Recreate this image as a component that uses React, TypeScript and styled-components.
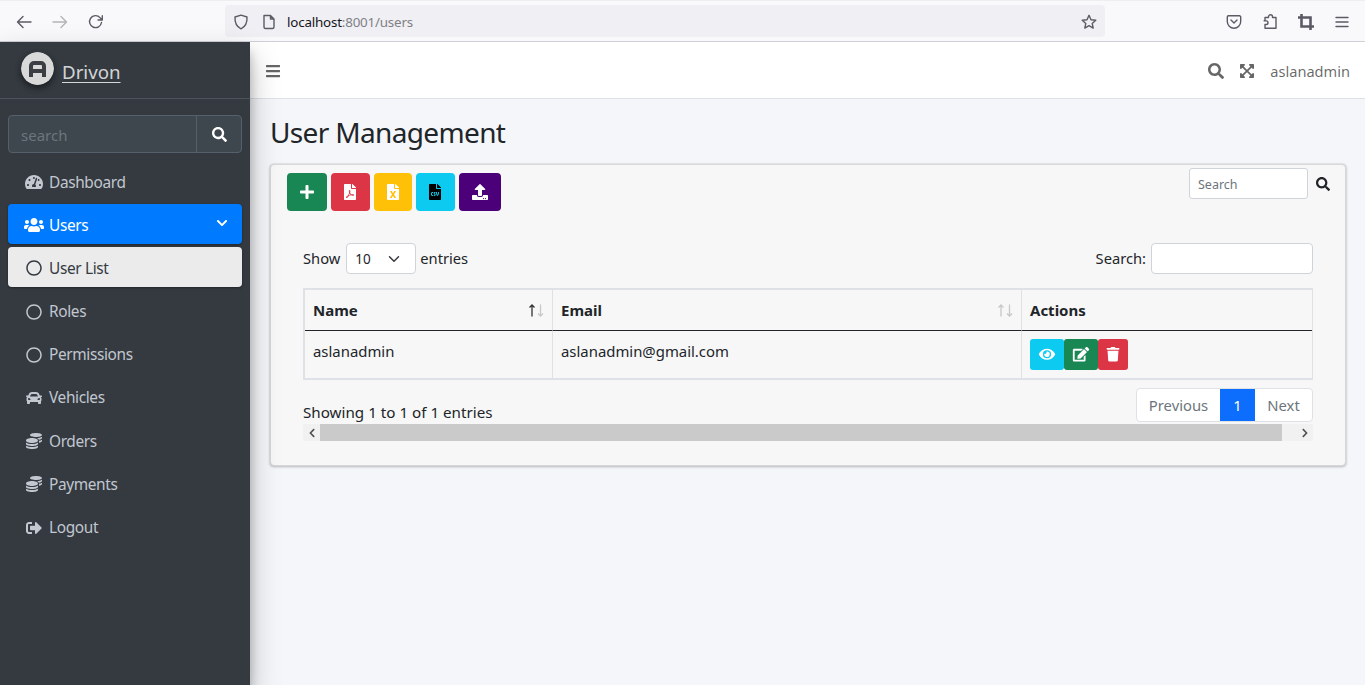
import React from 'react';
import styled, { createGlobalStyle } from 'styled-components';
import {
  FaBars,
  FaChevronDown,
  FaCar,
  FaCoins,
  FaEdit,
  FaExpandArrowsAlt,
  FaEye,
  FaFileCsv,
  FaFileExcel,
  FaFilePdf,
  FaPlus,
  FaRegCircle,
  FaSearch,
  FaSignOutAlt,
  FaTachometerAlt,
  FaTrash,
  FaUpload,
  FaUsers,
  FaChevronLeft,
  FaChevronRight,
} from 'react-icons/fa';

const GlobalStyle = createGlobalStyle`
  html, body {
    margin: 0;
    height: 100%;
    overflow: hidden;
  }
  body {
    font-family: "Noto Sans", "Open Sans", sans-serif;
    font-size: 15px;
    color: #212529;
    background: #f4f6f9;
  }
  * {
    box-sizing: border-box;
  }
`;

const Page = styled.div`
  width: 1365px;
  height: 685px;
  display: flex;
  flex-direction: column;
  overflow: hidden;
`;

/* browser chrome */
const BrowserBar = styled.div`
  height: 42px;
  flex: none;
  padding-top: 2px;
  display: flex;
  align-items: center;
  background: #f9f9fb;
  border-top: 1px solid #eeeef0;
  border-bottom: 1px solid #cfcfd8;
`;

const ChromeIcon = styled.svg<{ $left?: number; $dim?: boolean }>`
  width: 16px;
  height: 16px;
  flex: none;
  margin-left: ${props => props.$left ?? 0}px;
  fill: none;
  stroke: ${props => (props.$dim ? '#b4b4b9' : '#5b5b66')};
  stroke-width: 1.4;
  stroke-linecap: round;
  stroke-linejoin: round;
`;

const UrlBox = styled.div`
  width: 880px;
  height: 32px;
  margin: -2px 0 0 121px;
  padding: 2px 8px 0;
  display: flex;
  align-items: center;
  background: #f0f0f4;
  border-radius: 4px;
`;

const UrlText = styled.div`
  margin-left: 10px;
  flex: 1;
  font-family: "Noto Sans", sans-serif;
  font-size: 13.4px;
  letter-spacing: -0.2px;
  color: #15141a;

  span {
    color: #7f7f86;
  }
`;

const Body = styled.div`
  flex: 1;
  display: flex;
  min-height: 0;
`;

/* sidebar */
const Sidebar = styled.aside`
  width: 250px;
  flex: none;
  background: #343a40;
  box-shadow: 0 14px 28px rgba(0, 0, 0, 0.25), 0 10px 10px rgba(0, 0, 0, 0.22);
  position: relative;
  z-index: 2;
`;

const Brand = styled.div`
  height: 57px;
  padding: 10px 0 0 21px;
  display: flex;
  align-items: flex-start;
  gap: 8px;
  border-bottom: 1px solid #4b545c;
`;

const Logo = styled.svg`
  width: 33px;
  height: 33px;
  flex: none;
  border-radius: 50%;
  box-shadow: 0 3px 6px rgba(0, 0, 0, 0.3), 0 3px 6px rgba(0, 0, 0, 0.23);
`;

const BrandName = styled.a`
  font-size: 18.7px;
  line-height: 26px;
  color: rgba(255, 255, 255, 0.8);
  text-decoration: underline;
  text-underline-offset: 3px;
  text-decoration-thickness: 1px;
  margin-top: 7px;
`;

const SearchGroup = styled.div`
  margin: 16px 8px 8px;
  height: 38px;
  display: flex;
  background: #3f474e;
  border: 1px solid #56606a;
  border-radius: 4px;
`;

const SearchHint = styled.div`
  flex: 1;
  padding-left: 12px;
  line-height: 38px;
  font-size: 15px;
  color: #6c757d;
`;

const SearchButton = styled.div`
  width: 45px;
  display: flex;
  align-items: center;
  justify-content: center;
  border-left: 1px solid #56606a;
  color: #fff;
  font-size: 15px;
`;

const Nav = styled.nav`
  padding: 0 8px;
`;

const NavItem = styled.div<{ $state?: 'open' | 'current' }>`
  height: 40px;
  margin-top: 3.2px;
  padding: 2px 0 0 16px;
  display: flex;
  align-items: center;
  position: relative;
  border-radius: 4px;
  font-size: 15.4px;
  letter-spacing: -0.35px;
  color: ${props =>
    props.$state === 'open' ? '#fff' : props.$state === 'current' ? '#343a40' : '#c2c7d0'};
  background: ${props =>
    props.$state === 'open'
      ? '#007bff'
      : props.$state === 'current'
        ? 'rgba(255, 255, 255, 0.9)'
        : 'transparent'};
  box-shadow: ${props =>
    props.$state ? '0 1px 3px rgba(0, 0, 0, 0.12), 0 1px 2px rgba(0, 0, 0, 0.24)' : 'none'};
`;

const NavIcon = styled.span`
  width: 20px;
  margin-right: 5px;
  flex: none;
  display: flex;
  justify-content: center;
  font-size: 16px;

  svg {
    width: 100%;
    height: 1em;
  }
`;

const NavArrow = styled.span`
  position: absolute;
  right: 14px;
  top: 12px;
  font-size: 12px;
`;

/* main column */
const Main = styled.main`
  flex: 1;
  min-width: 0;
`;

const TopBar = styled.header`
  height: 57px;
  padding: 2px 15px 0;
  display: flex;
  align-items: center;
  background: #fff;
  border-bottom: 1px solid #dee2e6;
  color: rgba(0, 0, 0, 0.6);
`;

const TopBarRight = styled.div`
  margin-left: auto;
  display: flex;
  align-items: center;
  gap: 15px;
  font-size: 14.6px;
`;

const Title = styled.h1`
  margin: 0;
  padding: 13px 20px 12px;
  font-size: 28px;
  font-weight: 400;
  line-height: 40px;
  letter-spacing: -0.65px;
`;

const Card = styled.section`
  margin: 0 19px 0 20px;
  height: 302px;
  background: #f7f7f7;
  border: 1px solid #d8d8d8;
  border-radius: 4px;
  box-shadow: 0 0 2px rgba(0, 0, 0, 0.18), 0 1px 3px rgba(0, 0, 0, 0.2);
`;

const Toolbar = styled.div`
  height: 46px;
  padding: 8px 15px 0 16px;
  display: flex;
  align-items: flex-start;
`;

const ToolButton = styled.div<{ $color: string; $width: number; $ink?: string }>`
  width: ${props => props.$width}px;
  height: 38px;
  margin-right: 4px;
  display: flex;
  align-items: center;
  justify-content: center;
  background: ${props => props.$color};
  color: ${props => props.$ink ?? '#fff'};
  border-radius: 4px;
  font-size: 16px;
`;

const ToolSearch = styled.div`
  margin-left: auto;
  margin-top: -5px;
  display: flex;
  align-items: center;
  gap: 8px;
  font-size: 14px;
`;

const SmallInput = styled.div`
  width: 119px;
  height: 31px;
  padding-left: 8px;
  line-height: 31px;
  font-size: 12.5px;
  color: #6c757d;
  background: #fff;
  border: 1px solid #ced4da;
  border-radius: 3px;
`;

const Wrapper = styled.div`
  padding: 32px 32px 0;
`;

const ControlRow = styled.div`
  display: flex;
  align-items: center;
  justify-content: space-between;
  height: 31px;
  font-size: 14.7px;
`;

const ControlGroup = styled.div`
  display: flex;
  align-items: center;
  gap: 5px;

  > span {
    position: relative;
    top: -1px;
  }
`;

const PageSize = styled.div`
  width: 70px;
  height: 31px;
  margin: 0 -1px 0 1px;
  padding: 0 15px 0 8px;
  display: flex;
  align-items: center;
  justify-content: space-between;
  font-size: 13.5px;
  background: #fff;
  border: 1px solid #ced4da;
  border-radius: 4px;
  color: #212529;
`;

const SelectArrow = styled.svg`
  width: 12px;
  height: 12px;
  fill: none;
  stroke: #343a40;
  stroke-width: 2;
  stroke-linecap: round;
  stroke-linejoin: round;
`;

const FilterInput = styled.div`
  width: 162px;
  height: 31px;
  background: #fff;
  border: 1px solid #ced4da;
  border-radius: 4px;
`;

const Table = styled.table`
  width: 1010px;
  margin-top: 14px;
  border-collapse: separate;
  border-spacing: 0;
  table-layout: fixed;
  border: 2px solid #dee2e6;
  border-right-width: 1px;
  font-size: 14.9px;
`;

const HeadCell = styled.th`
  height: 41px;
  padding: 0 8px;
  text-align: left;
  font-size: 15px;
  font-weight: 700;
  position: relative;
  border-bottom: 1px solid #212529;
  border-right: 1px solid #dee2e6;

  &:last-child {
    border-right: 0;
  }
`;

const SortMark = styled.svg<{ $active?: boolean }>`
  position: absolute;
  right: 8px;
  top: 14px;
  width: 16px;
  height: 13px;
  fill: none;
  stroke: #c8c8c8;
  stroke-width: 1.3;

  .up {
    stroke: ${props => (props.$active ? '#333' : '#c8c8c8')};
  }
`;

const BodyCell = styled.td`
  height: 47px;
  padding: 10px 8px 0;
  vertical-align: top;
  border-right: 1px solid #dee2e6;

  &:last-child {
    border-right: 0;
  }
`;

const ActionRow = styled.div`
  display: flex;
  margin-top: -2px;
`;

const ActionButton = styled.div<{ $color: string; $width: number }>`
  width: ${props => props.$width}px;
  height: 31px;
  display: flex;
  align-items: center;
  justify-content: center;
  background: ${props => props.$color};
  color: #fff;
  border-radius: 3px;
  font-size: 14.5px;

  svg {
    width: 20px;
    height: 1em;
  }
`;

const InfoRow = styled.div`
  height: 44px;
  display: flex;
  justify-content: space-between;
  padding-top: 8px;
  font-size: 15.2px;
`;

const InfoText = styled.div`
  padding-top: 14px;
`;

const Pager = styled.div`
  display: flex;
  height: 34px;
  background: #fff;
  border: 1px solid #dee2e6;
  border-radius: 4px;
  overflow: hidden;
  color: #6c757d;
  font-size: 14.8px;
`;

const PagerItem = styled.div<{ $active?: boolean; $width: number }>`
  width: ${props => props.$width}px;
  display: flex;
  align-items: center;
  justify-content: center;
  background: ${props => (props.$active ? '#0d6efd' : 'transparent')};
  color: ${props => (props.$active ? '#fff' : 'inherit')};
`;

const ScrollBar = styled.div`
  height: 17px;
  display: flex;
  background: #f1f1f1;
  color: #505050;
  font-size: 10px;
`;

const ScrollEnd = styled.div`
  width: 17px;
  display: flex;
  align-items: center;
  justify-content: center;
`;

const ScrollThumb = styled.div`
  width: 962px;
  background: #cacaca;
`;

const ScrollGap = styled.div`
  flex: 1;
`;

const sideItems = [
  { label: 'Roles', icon: <FaRegCircle /> },
  { label: 'Permissions', icon: <FaRegCircle /> },
  { label: 'Vehicles', icon: <FaCar /> },
  { label: 'Orders', icon: <FaCoins /> },
  { label: 'Payments', icon: <FaCoins /> },
  { label: 'Logout', icon: <FaSignOutAlt /> },
];

function SortArrows({ active }: { active?: boolean }) {
  return (
    <SortMark $active={active} viewBox="0 0 16 13">
      <path className="up" d="M4 12.500V1M1.500 3.500 4 1l2.500 2.500" />
      <path d="M12.500 .5V12M10 9.500l2.500 2.500L15 9.500" />
    </SortMark>
  );
}

export default function App() {
  return (
    <Page>
      <GlobalStyle />
      <BrowserBar>
        <ChromeIcon $left={16} viewBox="0 0 16 16">
          <path d="M15 8H1.500M7 2.500 1.500 8 7 13.500" />
        </ChromeIcon>
        <ChromeIcon $left={20} $dim viewBox="0 0 16 16">
          <path d="M1 8h13.500M9 2.500 14.500 8 9 13.500" />
        </ChromeIcon>
        <ChromeIcon $left={20} viewBox="0 0 16 16">
          <path d="M13.500 8.500A6 6 0 1 1 12 3.600L14 6M14.300 1.800V6H10" />
        </ChromeIcon>
        <UrlBox>
          <ChromeIcon viewBox="0 0 16 16">
            <path d="M8 1.200 14 3c.3 5.500-1.500 9.700-6 11.800C3.500 12.700 1.700 8.500 2 3Z" />
          </ChromeIcon>
          <ChromeIcon $left={12} viewBox="0 0 16 16">
            <path d="M3 1.500h6.500L13 5v8a1.500 1.500 0 0 1-1.500 1.500h-7A1.500 1.500 0 0 1 3 13ZM9.500 1.500V5H13" />
          </ChromeIcon>
          <UrlText>
            localhost<span>:8001/users</span>
          </UrlText>
          <ChromeIcon viewBox="0 0 16 16">
            <path d="m8 1.300 2 4.400 4.800.5-3.600 3.200 1 4.700L8 11.700l-4.200 2.400 1-4.700L1.200 6.200 6 5.700Z" />
          </ChromeIcon>
        </UrlBox>
        <ChromeIcon $left={121} viewBox="0 0 16 16">
          <path d="M2.500 1.800h11A1.200 1.200 0 0 1 14.700 3v4.500a6.700 6.700 0 0 1-13.400 0V3a1.200 1.200 0 0 1 1.200-1.200ZM5 6l3 3 3-3" />
        </ChromeIcon>
        <ChromeIcon $left={20} viewBox="0 0 16 16">
          <path d="M6 3.500V2.800a2 2 0 0 1 4 0v.7h3.500v10.700H2.500v-3.700h1.200a1.800 1.800 0 0 0 0-3.600H1.800V6.500h.7V3.500Z" transform="translate(.5 0)" />
        </ChromeIcon>
        <ChromeIcon $left={20} viewBox="0 0 16 16" style={{ strokeWidth: 2.6, strokeLinecap: 'butt', strokeLinejoin: 'miter' }}>
          <path d="M0 3.500h12.500V16M3.500 0v12.500H16" />
        </ChromeIcon>
        <ChromeIcon $left={20} viewBox="0 0 16 16">
          <path d="M2 3.500h12M2 8h12M2 12.500h12" />
        </ChromeIcon>
      </BrowserBar>
      <Body>
        <Sidebar>
          <Brand>
            <Logo viewBox="0 0 33 33">
              <circle cx="16.500" cy="16.500" r="16.500" fill="#d9d9d9" />
              <path
                d="M10 25V14a3 3 0 0 1 3-3h7a3 3 0 0 1 3 3v11M10 19h13"
                fill="none"
                stroke="#3b3f44"
                strokeWidth="4"
              />
            </Logo>
            <BrandName>Drivon</BrandName>
          </Brand>
          <SearchGroup>
            <SearchHint>search</SearchHint>
            <SearchButton>
              <FaSearch />
            </SearchButton>
          </SearchGroup>
          <Nav>
            <NavItem>
              <NavIcon>
                <FaTachometerAlt />
              </NavIcon>
              Dashboard
            </NavItem>
            <NavItem $state="open">
              <NavIcon>
                <FaUsers />
              </NavIcon>
              Users
              <NavArrow>
                <FaChevronDown />
              </NavArrow>
            </NavItem>
            <NavItem $state="current">
              <NavIcon>
                <FaRegCircle />
              </NavIcon>
              User List
            </NavItem>
            {sideItems.map(item => (
              <NavItem key={item.label}>
                <NavIcon>{item.icon}</NavIcon>
                {item.label}
              </NavItem>
            ))}
          </Nav>
        </Sidebar>
        <Main>
          <TopBar>
            <FaBars size={16} />
            <TopBarRight>
              <FaSearch size={16} />
              <FaExpandArrowsAlt size={16} />
              <span>aslanadmin</span>
            </TopBarRight>
          </TopBar>
          <Title>User Management</Title>
          <Card>
            <Toolbar>
              <ToolButton $color="#198754" $width={40}>
                <FaPlus />
              </ToolButton>
              <ToolButton $color="#dc3545" $width={38.5}>
                <FaFilePdf />
              </ToolButton>
              <ToolButton $color="#ffc107" $width={38.5}>
                <FaFileExcel />
              </ToolButton>
              <ToolButton $color="#0dcaf0" $width={38.5} $ink="#000">
                <FaFileCsv />
              </ToolButton>
              <ToolButton $color="#4b0079" $width={42}>
                <FaUpload />
              </ToolButton>
              <ToolSearch>
                <SmallInput>Search</SmallInput>
                <FaSearch size={14} color="#212529" />
              </ToolSearch>
            </Toolbar>
            <Wrapper>
              <ControlRow>
                <ControlGroup>
                  <span>Show</span>
                  <PageSize>
                    10
                    <SelectArrow viewBox="0 0 16 16">
                      <path d="m2 5 6 6 6-6" />
                    </SelectArrow>
                  </PageSize>
                  <span>entries</span>
                </ControlGroup>
                <ControlGroup>
                  <span>Search:</span>
                  <FilterInput />
                </ControlGroup>
              </ControlRow>
              <Table>
                <colgroup>
                  <col style={{ width: 248 }} />
                  <col style={{ width: 469 }} />
                  <col />
                </colgroup>
                <thead>
                  <tr>
                    <HeadCell>
                      Name
                      <SortArrows active />
                    </HeadCell>
                    <HeadCell>
                      Email
                      <SortArrows />
                    </HeadCell>
                    <HeadCell>Actions</HeadCell>
                  </tr>
                </thead>
                <tbody>
                  <tr>
                    <BodyCell>aslanadmin</BodyCell>
                    <BodyCell>aslanadmin@gmail.com</BodyCell>
                    <BodyCell>
                      <ActionRow>
                        <ActionButton $color="#0dcaf0" $width={34}>
                          <FaEye />
                        </ActionButton>
                        <ActionButton $color="#198754" $width={34}>
                          <FaEdit />
                        </ActionButton>
                        <ActionButton $color="#dc3545" $width={30}>
                          <FaTrash />
                        </ActionButton>
                      </ActionRow>
                    </BodyCell>
                  </tr>
                </tbody>
              </Table>
              <InfoRow>
                <InfoText>Showing 1 to 1 of 1 entries</InfoText>
                <Pager>
                  <PagerItem $width={83}>Previous</PagerItem>
                  <PagerItem $width={35} $active>
                    1
                  </PagerItem>
                  <PagerItem $width={57}>Next</PagerItem>
                </Pager>
              </InfoRow>
              <ScrollBar>
                <ScrollEnd>
                  <FaChevronLeft />
                </ScrollEnd>
                <ScrollThumb />
                <ScrollGap />
                <ScrollEnd>
                  <FaChevronRight />
                </ScrollEnd>
              </ScrollBar>
            </Wrapper>
          </Card>
        </Main>
      </Body>
    </Page>
  );
}
